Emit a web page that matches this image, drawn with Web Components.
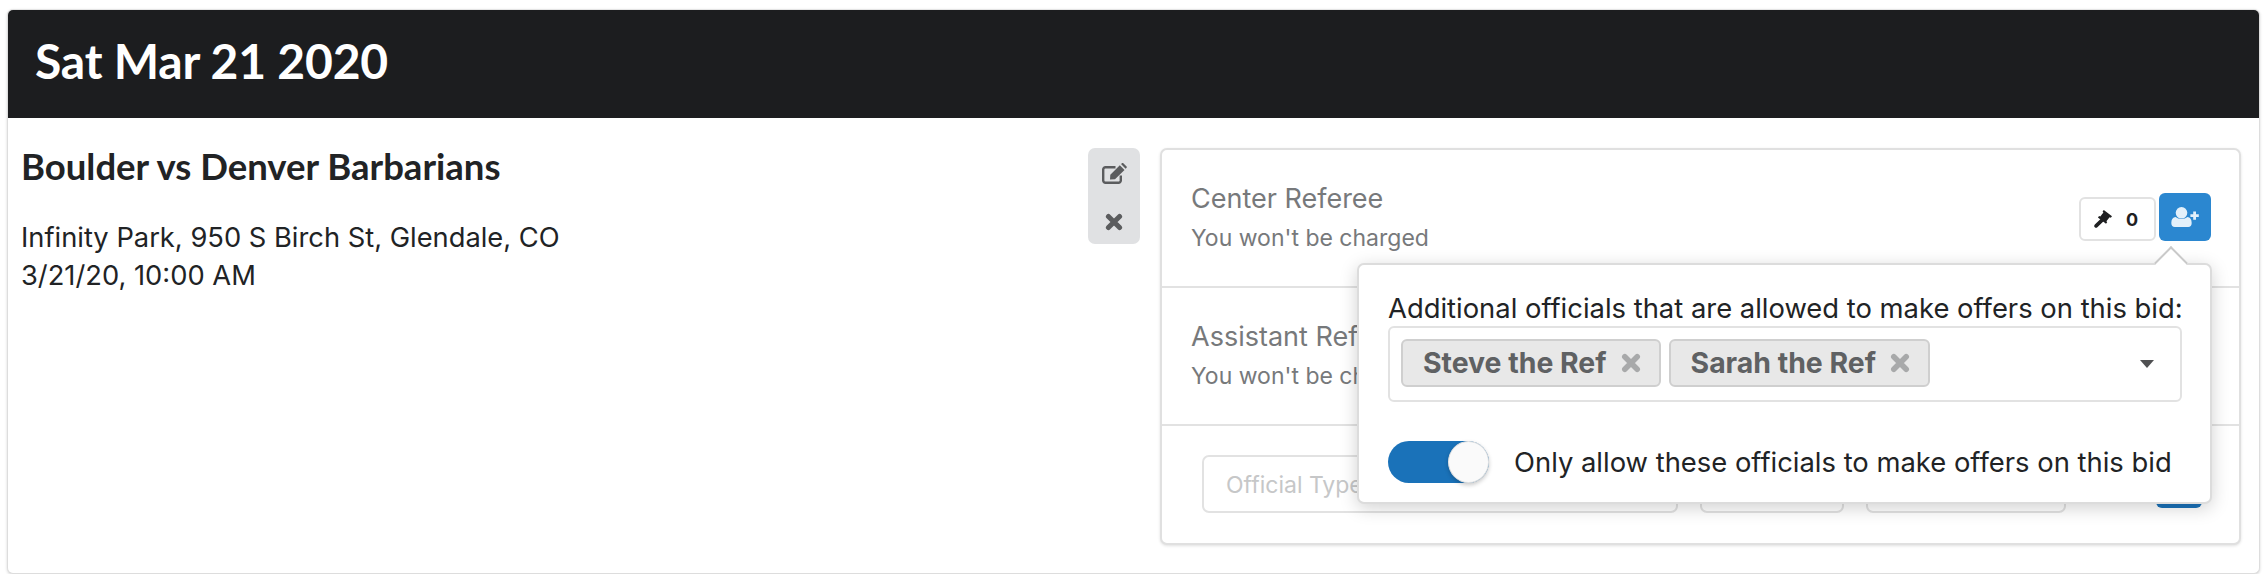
<!DOCTYPE html>
<html>
<head>
<meta charset="utf-8">
<style>
  body{ margin:0; background:#fff; font-family:"Inter","Liberation Sans",sans-serif; color:#212325; }
</style>
</head>
<body>
<bid-card heading="Sat Mar 21 2020">
  <game-info title-text="Boulder vs Denver Barbarians">
    <div>Infinity Park, 950 S Birch St, Glendale, CO</div>
    <div>3/21/20, 10:00 AM</div>
  </game-info>
  <action-group></action-group>
  <officials-panel></officials-panel>
</bid-card>

<script>
const ICONS = {
  edit: `<svg viewBox="0 0 25 21" width="25" height="21"><path fill="none" stroke="currentColor" stroke-width="2.400" d="M18.800 12.500v5a2.300 2.300 0 0 1-2.300 2.300H3.500a2.300 2.300 0 0 1-2.300-2.300V6.500a2.300 2.300 0 0 1 2.300-2.300h10"/><path fill="currentColor" d="M8 16.600 8.300 11.700 17.800 2.300 22.500 7 13 16.300zM19 1.100 20 .2c.4-.3.9-.3 1.300 0L24.600 3.500c.3.400.3.900 0 1.300l-1 1z"/></svg>`,
  times: `<svg viewBox="0 0 20 20" width="100%" height="100%"><path fill="none" stroke="currentColor" stroke-width="5.600" stroke-linecap="round" d="M3.800 3.800 16.200 16.200M16.200 3.800 3.800 16.200"/></svg>`,
  gavel: `<svg viewBox="0 0 18 18" width="18" height="18"><path fill="currentColor" d="M9.800 0 18 6.300 16.800 7.800 15.600 7.200 12.400 11.300 13.200 12.300 12 13.800 3.900 7.500 5.100 6 6.300 6.600 9.400 2.600 8.600 1.500z"/><path fill="none" stroke="currentColor" stroke-width="3.600" stroke-linecap="round" d="M8.600 9.600 2.100 15.900"/></svg>`,
  userPlus: `<svg viewBox="0 0 28 20" width="28" height="20"><circle cx="10.500" cy="5.800" r="5.800" fill="currentColor"/><path fill="currentColor" d="M.3 16c0-3.600 1.600-5.700 4.300-6 1.500 1.200 3.500 1.900 5.900 1.900s4.400-.7 5.900-1.900c2.700.3 4.300 2.400 4.300 6 0 2.500-1.400 4-3.500 4H3.800C1.700 20 .3 18.500.3 16z"/><path fill="none" stroke="currentColor" stroke-width="2.800" d="M23.600 4.400v8.400M19.400 8.600h8.400"/></svg>`
}

class AppIcon extends HTMLElement {
  connectedCallback(){
    const shadow = this.attachShadow({mode:'open'})
    shadow.innerHTML = `<style>:host{display:inline-flex;align-items:center;justify-content:center;line-height:0}</style>${ICONS[this.getAttribute('name')]}`
  }
}

class BidCard extends HTMLElement {
  connectedCallback(){
    const shadow = this.attachShadow({mode:'open'})
    shadow.innerHTML = `
    <style>
      :host{
        display:block; box-sizing:border-box;
        margin:9px 8px 0 7px; height:565px;
        border:1px solid #ddd; border-top-color:#e4e4e4; border-radius:6px;
        box-shadow:0 1px 3px rgba(0,0,0,.16);
        overflow:hidden; background:#fff;
      }
      header{
        background:#1c1d1f; color:#fff; height:108px; box-sizing:border-box;
        padding:0 27px 6px 27px; display:flex; align-items:center;
        font:700 48px/1 "Lato","Liberation Sans",sans-serif; letter-spacing:-.2px;
      }
      main{ display:flex; align-items:flex-start; padding:30px 18px 0 13px; }
    </style>
    <header>${this.getAttribute('heading')}</header>
    <main><slot></slot></main>`
  }
}

class GameInfo extends HTMLElement {
  connectedCallback(){
    const shadow = this.attachShadow({mode:'open'})
    shadow.innerHTML = `
    <style>
      :host{ display:block; flex:1; font-size:27.3px; line-height:38px; color:#212325; }
      h2{ margin:-4px 0 31px; font:700 36.5px/44px "Lato","Liberation Sans",sans-serif; }
    </style>
    <h2>${this.getAttribute('title-text')}</h2>
    <slot></slot>`
  }
}

class ActionGroup extends HTMLElement {
  connectedCallback(){
    const shadow = this.attachShadow({mode:'open'})
    shadow.innerHTML = `
    <style>
      :host{
        display:flex; flex-direction:column; align-items:center; gap:29px;
        box-sizing:border-box; width:52px; height:96px; margin-right:20px; padding:15px 0 0;
        background:#e0e1e3; border-radius:7px; color:#5b5c5e;
      }
      .x{ width:18px; height:18px; }
    </style>
    <app-icon name="edit"></app-icon>
    <app-icon class="x" name="times"></app-icon>`
  }
}

class OfficialRow extends HTMLElement {
  connectedCallback(){
    const shadow = this.attachShadow({mode:'open'})
    shadow.innerHTML = `
    <style>
      :host{
        display:flex; box-sizing:border-box; height:138px; padding:31px 28px 0 29px;
        border-bottom:2px solid #e2e2e2; color:#77797b;
      }
      .grow{ flex:1; }
      .name{ font-size:27px; line-height:36px; }
      .note{ font-size:23px; line-height:32px; margin-top:5px; }
      .tools{ display:flex; align-items:flex-start; gap:3px; margin-top:12px; }
      .bid{
        display:flex; align-items:center; gap:14px; box-sizing:border-box;
        width:77px; height:44px; margin-top:4px; padding-left:13px;
        border:2px solid #e2e2e2; border-radius:6px; color:#1f2022;
        font-size:18px; font-weight:700;
      }
      .add{
        display:flex; align-items:center; justify-content:center;
        width:52px; height:48px; background:#2b87d0; color:#e3f0fa; border-radius:6px;
      }
    </style>
    <div class="grow">
      <div class="name">${this.getAttribute('name')}</div>
      <div class="note">You won't be charged</div>
    </div>
    ${this.hasAttribute('tools') ? `<div class="tools">
      <div class="bid"><app-icon name="gavel"></app-icon><span>0</span></div>
      <div class="add"><app-icon name="userPlus"></app-icon></div>
    </div>` : ''}`
  }
}

class OfferForm extends HTMLElement {
  connectedCallback(){
    const shadow = this.attachShadow({mode:'open'})
    shadow.innerHTML = `
    <style>
      :host{ display:flex; align-items:flex-start; gap:22px; padding:29px 0 0 40px; }
      div{
        box-sizing:border-box; height:58px; border:2px solid #e2e2e2; border-radius:7px;
        padding:0 22px; line-height:56px; font-size:23px; color:#c6c7c8;
      }
      .type{ width:476px; }
      .a{ width:144px; }
      .b{ width:200px; }
      button{ width:46px; height:53px; margin-left:68px; border:0; padding:0; border-radius:6px; background:#1a72b9; }
    </style>
    <div class="type">Official Type</div>
    <div class="a"></div>
    <div class="b"></div>
    <button></button>`
  }
}

class OfficialChip extends HTMLElement {
  connectedCallback(){
    const shadow = this.attachShadow({mode:'open'})
    shadow.innerHTML = `
    <style>
      :host{
        display:inline-flex; align-items:center; gap:14px; box-sizing:border-box;
        height:48px; padding:0 18px 0 20px;
        background:#e8e8e8; border:2px solid #cfcfcf; border-radius:6px;
        color:#5f6163; font-size:28.4px; font-weight:700;
      }
      app-icon{ width:20px; height:20px; color:#a8a9aa; }
    </style>
    <slot></slot><app-icon name="times"></app-icon>`
  }
}

class ToggleSwitch extends HTMLElement {
  connectedCallback(){
    const shadow = this.attachShadow({mode:'open'})
    shadow.innerHTML = `
    <style>
      :host{ display:block; position:relative; width:101px; height:42px; border-radius:21px; background:#1a72b9; }
      i{
        position:absolute; right:0; top:0; width:41px; height:42px; box-sizing:border-box;
        border-radius:50%; background:#fafafa; border:1px solid #e2e2e2;
        box-shadow:0 2px 4px rgba(0,0,0,.22);
      }
    </style>
    <i></i>`
  }
}

class OffersPopover extends HTMLElement {
  connectedCallback(){
    const shadow = this.attachShadow({mode:'open'})
    shadow.innerHTML = `
    <style>
      :host{
        position:absolute; left:195px; top:113px; width:855px; height:241px; box-sizing:border-box;
        padding:25px 28px 0 29px; background:#fff; border:2px solid #dcdcdc; border-radius:7px;
        box-shadow:0 4px 18px rgba(0,0,0,.18);
        color:#212325; font-size:27.4px;
      }
      .arrow{
        position:absolute; right:27px; top:-14px; width:24px; height:24px; box-sizing:border-box;
        background:#fff; border:2px solid #c9c9c9; border-right:0; border-bottom:0;
        transform:rotate(45deg);
      }
      .label{ line-height:36px; white-space:nowrap; }
      .select{
        display:flex; align-items:center; gap:8px; box-sizing:border-box; height:76px; margin-top:0;
        padding:0 11px 3px; border:2px solid #e2e2e2; border-radius:6px;
      }
      .caret{
        margin:3px 15px 0 auto; width:0; height:0;
        border:7.500px solid transparent; border-top:8px solid #4f5052; border-bottom:0;
      }
      .switch{ display:flex; align-items:center; gap:25px; margin-top:39px; white-space:nowrap; }
    </style>
    <span class="arrow"></span>
    <div class="label">Additional officials that are allowed to make offers on this bid:</div>
    <div class="select">
      <official-chip>Steve the Ref</official-chip>
      <official-chip>Sarah the Ref</official-chip>
      <span class="caret"></span>
    </div>
    <div class="switch"><toggle-switch></toggle-switch><span>Only allow these officials to make offers on this bid</span></div>`
  }
}

class OfficialsPanel extends HTMLElement {
  connectedCallback(){
    const shadow = this.attachShadow({mode:'open'})
    shadow.innerHTML = `
    <style>
      :host{
        display:block; position:relative; box-sizing:border-box; width:1081px; height:397px;
        border:2px solid #e0e0e0; border-radius:7px;
        box-shadow:0 1px 3px rgba(0,0,0,.12); background:#fff;
      }
    </style>
    <official-row name="Center Referee" tools></official-row>
    <official-row name="Assistant Referee"></official-row>
    <offer-form></offer-form>
    <offers-popover></offers-popover>`
  }
}

customElements.define('app-icon', AppIcon)
customElements.define('official-chip', OfficialChip)
customElements.define('toggle-switch', ToggleSwitch)
customElements.define('offers-popover', OffersPopover)
customElements.define('official-row', OfficialRow)
customElements.define('offer-form', OfferForm)
customElements.define('officials-panel', OfficialsPanel)
customElements.define('action-group', ActionGroup)
customElements.define('game-info', GameInfo)
customElements.define('bid-card', BidCard)
</script>
</body>
</html>
